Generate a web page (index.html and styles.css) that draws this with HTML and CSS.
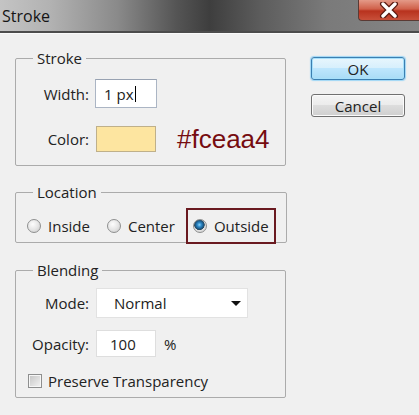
FILE: index.html
```html
<!DOCTYPE html>
<html lang="en">
  <head>
    <meta charset="utf-8">
    <title>Stroke</title>
    <link rel="stylesheet" href="styles.css">
  </head>
  <body>

  <div class="titlebar">
    <span class="title">Stroke</span>
    <span class="close">
      <svg width="22" height="16" viewBox="0 0 22 16">
        <path d="M5 2 L17 14 M17 2 L5 14" stroke="#5a1a10" stroke-width="6" stroke-linecap="round"/>
        <path d="M5 2 L17 14 M17 2 L5 14" stroke="#ffffff" stroke-width="3.4" stroke-linecap="round"/>
      </svg>
    </span>
  </div>

  <div class="dialog">
    <div class="groups">

      <fieldset class="group">
        <legend>Stroke</legend>
        <div class="rows stroke-rows">
          <label class="field-label">Width:</label>
          <div class="field"><span class="textbox width-box">1 px<span class="caret"></span></span></div>
          <label class="field-label">Color:</label>
          <div class="field"><span class="swatch"></span><span class="hex">#fceaa4</span></div>
        </div>
      </fieldset>

      <fieldset class="group location">
        <legend>Location</legend>
        <div class="radios">
          <label class="radio-item"><span class="radio"></span>Inside</label>
          <label class="radio-item"><span class="radio"></span>Center</label>
          <label class="radio-item marked"><span class="radio checked"></span>Outside</label>
        </div>
      </fieldset>

      <fieldset class="group blending">
        <legend>Blending</legend>
        <div class="rows blend-rows">
          <label class="field-label">Mode:</label>
          <div class="field"><span class="select">Normal<span class="arrow"></span></span></div>
          <label class="field-label">Opacity:</label>
          <div class="field"><span class="textbox opacity-box">100</span><span class="unit">%</span></div>
          <label class="check-row"><span class="checkbox"></span>Preserve Transparency</label>
        </div>
      </fieldset>

    </div>

    <div class="buttons">
      <span class="button default">OK</span>
      <span class="button">Cancel</span>
    </div>
  </div>

  </body>
</html>
```

FILE: styles.css
```css
html {
  height: 100%;
}
body {
  margin: 0;
  padding: 0;
  height: 100%;
  background: #f0f0f0;
  color: #222;
  font-family: "Open Sans", sans-serif;
  font-size: 15px;
  overflow: hidden;
}

/* window chrome */

.titlebar {
  height: 31px;
  display: flex;
  justify-content: space-between;
  align-items: flex-start;
  background: linear-gradient(to right, #c4c4c4 0%, #b2b2b2 12%, #8a8a8a 28%, #555 42%, #3e3e3e 50%, #5c5c5c 62%, #7a7a7a 78%, #858585 100%);
  border-bottom: 2px solid #4c4c4c;
  box-shadow: 0 1px 0 #fafafa;
}
.title {
  padding: 5px 0 0 2px;
  font-size: 16px;
  color: #151515;
}
.close {
  width: 60px;
  height: 20px;
  display: flex;
  align-items: center;
  justify-content: center;
  border: 1px solid #5a3a34;
  border-top: none;
  border-right: none;
  border-bottom-left-radius: 4px;
  background: linear-gradient(#e49a88 0%, #d0604a 45%, #b8321e 55%, #c8503a 100%);
}

/* layout */

.dialog {
  display: flex;
  padding: 16px 0 0 15px;
}
.groups {
  width: 271px;
  display: flex;
  flex-direction: column;
}

.group {
  margin: 0;
  padding: 12px 0 13px 0;
  border: 1px solid #ababab;
  border-radius: 2px;
}
.group legend {
  margin-left: 17px;
  padding: 0 4px;
  line-height: 18px;
}
.location {
  margin-top: 17px;
  padding: 14px 0 5px 0;
}
.blending {
  margin-top: 18px;
  padding: 9px 0 9px 0;
}

.rows {
  display: grid;
  grid-template-columns: 73px 1fr;
  column-gap: 6px;
  align-items: center;
}
.stroke-rows {
  row-gap: 18px;
}
.blend-rows {
  column-gap: 7px;
  row-gap: 12px;
}
.field-label {
  justify-self: end;
}
.field {
  display: flex;
  align-items: center;
}

/* controls */

.textbox {
  box-sizing: border-box;
  display: flex;
  align-items: center;
  background: #fff;
  padding-left: 8px;
}
.width-box {
  width: 62px;
  height: 29px;
  border: 1px solid #abb5c4;
  border-top-color: #98a2b2;
}
.caret {
  display: inline-block;
  width: 1px;
  height: 16px;
  background: #000;
  margin-left: 1px;
}
.opacity-box {
  width: 60px;
  height: 27px;
  border: 1px solid #dedede;
  padding-left: 13px;
}
.unit {
  margin-left: 8px;
}

.swatch {
  box-sizing: border-box;
  width: 60px;
  height: 26px;
  margin-left: 1px;
  background: #fde5a0;
  border: 1px solid #bfb08a;
}
.hex {
  margin-left: 21px;
  font-family: "Liberation Sans", sans-serif;
  font-size: 26px;
  line-height: 26px;
  color: #760c10;
}

.select {
  box-sizing: border-box;
  width: 152px;
  height: 30px;
  display: flex;
  align-items: center;
  justify-content: space-between;
  padding: 0 6px 0 17px;
  background: #fff;
  border: 1px solid #e2e2e2;
}
.arrow {
  width: 0;
  height: 0;
  border-left: 5px solid transparent;
  border-right: 5px solid transparent;
  border-top: 5px solid #111;
}

.radios {
  display: flex;
  align-items: center;
  height: 22px;
  padding-left: 11px;
}
.radio-item {
  display: flex;
  align-items: center;
  height: 22px;
  margin-right: 17px;
}
.radio {
  box-sizing: border-box;
  width: 14px;
  height: 14px;
  margin-right: 7px;
  border-radius: 50%;
  border: 1px solid #8e8f8f;
  background: radial-gradient(circle at 40% 35%, #fdfdfd 0, #e6e6e6 50%, #c8c8c8 100%);
}
.radio.checked {
  background:
    radial-gradient(circle at 45% 40%, #8fd6f8 0, #2f8ccc 2px, #1b5a88 4px, #2b4a60 5px, transparent 5.5px),
    radial-gradient(circle at 40% 35%, #fdfdfd 0, #e6e6e6 50%, #c8c8c8 100%);
}
.marked {
  outline: 2px solid #6a1a20;
  outline-offset: 5px;
  margin-left: 1px;
}

.check-row {
  grid-column: 1 / 3;
  display: flex;
  align-items: center;
  height: 15px;
  padding-left: 12px;
  margin-top: 4px;
}
.checkbox {
  box-sizing: border-box;
  width: 14px;
  height: 14px;
  margin-right: 6px;
  border: 1px solid #8e8f8f;
  background: linear-gradient(135deg, #c4c4c4, #f4f4f4);
  box-shadow: inset 0 0 0 1px #f6f6f6;
}

/* buttons */

.buttons {
  display: flex;
  flex-direction: column;
  margin: 8px 0 0 25px;
}
.button {
  box-sizing: border-box;
  width: 94px;
  height: 23px;
  margin-bottom: 14px;
  display: flex;
  align-items: center;
  justify-content: center;
  border: 1px solid #707070;
  border-radius: 3px;
  background: linear-gradient(#f4f4f4 0%, #ebebeb 50%, #dddddd 50%, #cfcfcf 100%);
  box-shadow: inset 0 0 0 1px #fbfbfb;
}
.button.default {
  border-color: #3c7fb1;
  background: linear-gradient(#e8f6fd 0%, #d6effc 50%, #bee6fd 50%, #a9dcf6 100%);
  box-shadow: inset 0 0 0 1px #a6e0fb, 0 0 1px 1px #9ed6f5;
}
```
